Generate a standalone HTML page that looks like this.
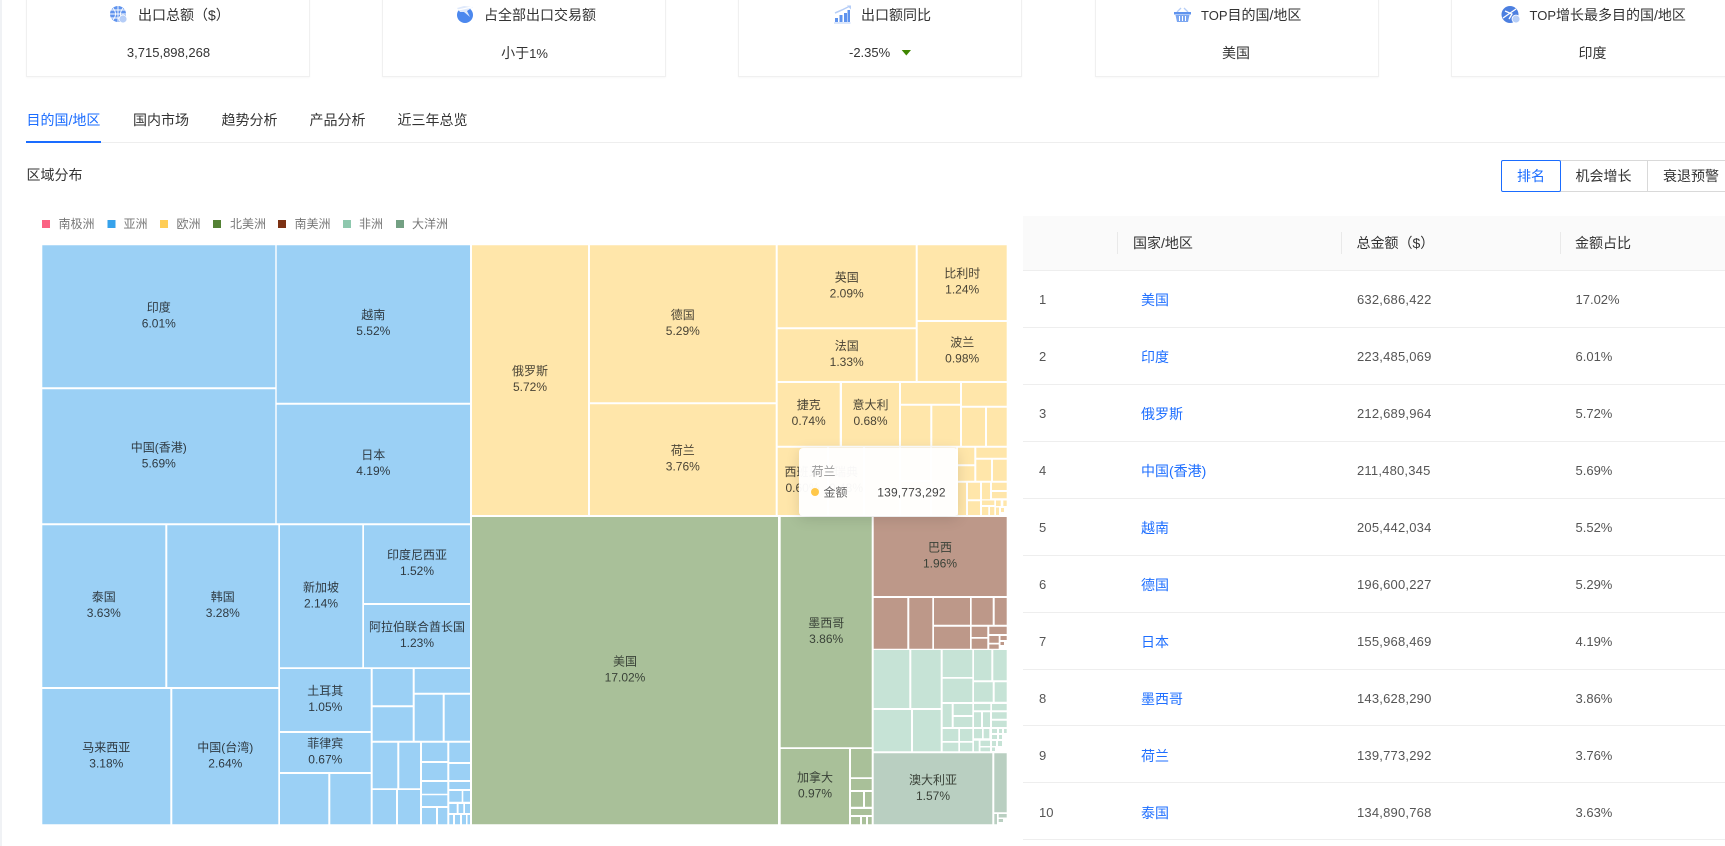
<!DOCTYPE html>
<html lang="zh">
<head>
<meta charset="utf-8">
<title>出口概览</title>
<style>
html,body{margin:0;padding:0;background:#fff}
body{width:1725px;height:846px;overflow:hidden;position:relative;font-family:"Liberation Sans","Noto Sans CJK SC",sans-serif;color:#333;font-size:14px}
.gut{position:absolute;left:0;top:0;width:2px;height:846px;background:#f0f2f5}
.card{position:absolute;top:-2px;width:282px;height:77px;border:1px solid #f0f0f0;background:#fff;box-shadow:0 1px 2px rgba(0,0,0,.03)}
.t{position:absolute;white-space:nowrap;line-height:20px;height:20px}
.c{transform:translateX(-50%)}
.l{font-size:13px}
.tab{top:110px}
.btn{position:absolute;top:159.5px;height:30px;line-height:30px;text-align:center;border:1px solid #d9d9d9;background:#fff;box-sizing:content-box}
.hd{position:absolute;left:1023px;top:216px;width:702px;height:54px;background:#fafafa;border-bottom:1px solid #eee}
.sep{position:absolute;top:232px;width:1px;height:22px;background:#e9e9e9}
.row{position:absolute;left:1023px;width:702px;height:1px;background:#eee}
.r{font-size:13px;color:#555;margin-top:1px}
.n{letter-spacing:.2px}
.a{color:#1f6fff;font-size:14px;margin-top:1px}
.tip{position:absolute;left:799px;top:448px;width:159px;height:68px;border-radius:4px;background:rgba(255,255,255,.96);box-shadow:0 3px 14px rgba(0,0,0,.12)}
svg{position:absolute;left:0;top:0}
svg text{font-family:"Liberation Sans","Noto Sans CJK SC",sans-serif;font-size:12px}
</style>
</head>
<body>
<div class="gut"></div>

<div class="card" style="left:26px"></div>
<div class="card" style="left:382px"></div>
<div class="card" style="left:738px"></div>
<div class="card" style="left:1094.5px"></div>
<div class="card" style="left:1450.5px"></div>

<!-- card icons -->
<svg width="1725" height="60" style="z-index:2">
  <g>
    <circle cx="118" cy="14" r="8" fill="#5f93ee"/>
    <path d="M110 14H126M118 6V22M113 8Q118 14 113 20M123 8Q118 14 123 20M111 10H125M111 18H125" stroke="#fff" stroke-width=".9" fill="none"/>
    <circle cx="123" cy="19" r="4" fill="#b5cdf7" stroke="#fff" stroke-width=".8"/>
  </g>
  <g>
    <circle cx="465" cy="15" r="8" fill="#4c88ee"/>
    <path d="M457 8L464 6L473 7L467 11L470 17L464 12L460 12Z" fill="#dfe9fb"/>
    <path d="M458 10L472 7" stroke="#fff" stroke-width="1.2"/>
  </g>
  <g>
    <path d="M835 13L842 10L846 8L850 6" stroke="#b5cdf7" stroke-width="1.5" fill="none"/>
    <path d="M847 5.5H851V9.5Z" fill="#b5cdf7"/>
    <path d="M835 18H838V22H835ZM839.5 15H842.5V22H839.5ZM844 13H847V22H844Z" fill="#5f93ee"/>
    <rect x="847.5" y="10" width="2.5" height="12" fill="#5f93ee"/>
    <rect x="834" y="22.5" width="16.5" height="1" fill="#b5cdf7"/>
  </g>
  <g>
    <path d="M1177 12L1181 8M1188 12L1184 8" stroke="#b5cdf7" stroke-width="1.3" fill="none"/>
    <rect x="1174" y="12" width="17" height="2.5" fill="#5f93ee"/>
    <path d="M1175.5 15H1189.5L1188 22H1177Z" fill="#7ba6f1"/>
    <path d="M1179.5 16V21M1182.5 16V21M1185.5 16V21" stroke="#fff" stroke-width="1"/>
  </g>
  <g>
    <circle cx="1510" cy="14.5" r="8.5" fill="#4c7fe0"/>
    <path d="M1503 18L1516 9M1505 11L1512 14L1509 19" stroke="#fff" stroke-width="1.3" fill="none"/>
    <circle cx="1516" cy="19" r="4" fill="#b5cdf7" stroke="#fff" stroke-width=".8"/>
  </g>
  <path d="M901.7 50H911L906.3 55.5Z" fill="#3f8600"/>
</svg>

<!-- card text -->
<span class="t" style="left:138px;top:5px">出口总额（$）</span>
<span class="t c l" style="left:168.5px;top:43px">3,715,898,268</span>
<span class="t" style="left:484px;top:5px">占全部出口交易额</span>
<span class="t c" style="left:524.5px;top:43px">小于<span class="l">1%</span></span>
<span class="t" style="left:861px;top:5px">出口额同比</span>
<span class="t l" style="left:849px;top:43px">-2.35%</span>
<span class="t" style="left:1201px;top:5px"><span class="l">TOP</span>目的国/地区</span>
<span class="t c" style="left:1236px;top:43px">美国</span>
<span class="t" style="left:1529.5px;top:5px"><span class="l">TOP</span>增长最多目的国/地区</span>
<span class="t c" style="left:1592.5px;top:43px">印度</span>

<!-- tabs -->
<div style="position:absolute;left:26px;top:142px;width:1699px;height:1px;background:#eee"></div>
<div style="position:absolute;left:26px;top:141px;width:75px;height:2px;background:#1a6cff"></div>
<span class="t tab" style="left:26.5px;color:#1a6cff">目的国/地区</span>
<span class="t tab" style="left:133px">国内市场</span>
<span class="t tab" style="left:221.5px">趋势分析</span>
<span class="t tab" style="left:309.5px">产品分析</span>
<span class="t tab" style="left:397.5px">近三年总览</span>

<span class="t" style="left:26.5px;top:165px">区域分布</span>

<!-- button group -->
<div class="btn" style="left:1560px;width:87px;border-left:0">机会增长</div>
<div class="btn" style="left:1648px;width:86px;border-left:0">衰退预警</div>
<div class="btn" style="left:1501px;width:58px;border-color:#1a6cff;color:#1a6cff;border-radius:2px">排名</div>

<!-- treemap -->
<svg width="1725" height="846">
  <!-- legend -->
  <rect x="42" y="220" width="8" height="8" fill="#fb6283"/>
  <rect x="107.5" y="220" width="8" height="8" fill="#36a2eb"/>
  <rect x="160" y="220" width="8" height="8" fill="#ffcd56"/>
  <rect x="213" y="220" width="8" height="8" fill="#538134"/>
  <rect x="278" y="220" width="8" height="8" fill="#7c3113"/>
  <rect x="343" y="220" width="8" height="8" fill="#8ec8ae"/>
  <rect x="396" y="220" width="8" height="8" fill="#73a083"/>
  <g fill="#777">
    <text x="58.5" y="228">南极洲</text>
    <text x="123.5" y="228">亚洲</text>
    <text x="176.5" y="228">欧洲</text>
    <text x="230" y="228">北美洲</text>
    <text x="294.5" y="228">南美洲</text>
    <text x="359" y="228">非洲</text>
    <text x="412" y="228">大洋洲</text>
  </g>

  <!-- Asia -->
  <path fill="#9bd0f5" d="M42.3 245.3H275.3V387.3H42.3Z
  M42.3 389.3H275.3V523.3H42.3Z
  M276.7 245.3H470V402.7H276.7Z
  M276.7 404.7H470V523.3H276.7Z
  M42.3 525.3H165.3V687H42.3Z
  M167.3 525.3H278.3V687H167.3Z
  M42.3 689H170.3V824.3H42.3Z
  M172.3 689H278.3V824.3H172.3Z
  M280 525.3H362.3V667.3H280Z
  M364 525.3H470V603H364Z
  M364 605H470V667.3H364Z
  M280 669H370.7V731H280Z
  M280 733H370.7V772H280Z
  M280 774H328.3V824.3H280Z
  M330.3 774H370.7V824.3H330.3Z
  M372.7 669H412.7V705.3H372.7Z
  M372.7 707.3H412.7V740.7H372.7Z
  M414.7 669H470V692.7H414.7Z
  M414.7 694.7H442.7V740.7H414.7Z
  M444.7 694.7H470V740.7H444.7Z
  M372.7 742.7H397.3V788.3H372.7Z
  M399.3 742.7H420V788.3H399.3Z
  M372.7 790H396V824.3H372.7Z
  M398 790H420V824.3H398Z
  M422 742.7H447.3V761H422Z
  M449.3 742.7H470V762H449.3Z
  M422 763H447.3V780H422Z
  M449.3 764H470V780H449.3Z
  M422 782H447.3V793.7H422Z
  M449.3 782H470V789H449.3Z
  M422 795.3H447.3V806H422Z
  M422 808H436V824.3H422Z
  M438 808H447.3V824.3H438Z
  M449.3 791H461.7V801.7H449.3Z
  M463.3 791H470V801.7H463.3Z
  M449.3 804H456.7V813H449.3Z
  M458.6 804H463.3V813H458.6Z
  M465 804H470V813H465Z
  M449.3 815H453V824.3H449.3Z
  M455 815H460V824.3H455Z
  M462 815H466V824.3H462Z
  M467.5 815H470V824.3H467.5Z"/>

  <!-- Europe -->
  <path fill="#ffe6aa" d="M472 245.3H588V515H472Z
  M590 245.3H775.7V402.3H590Z
  M590 404.3H775.7V515H590Z
  M777.7 245.3H915.7V327.3H777.7Z
  M917.7 245.3H1006.7V320H917.7Z
  M777.7 329.3H915.7V381H777.7Z
  M917.7 322H1006.7V381H917.7Z
  M777.7 383H839.7V445.7H777.7Z
  M842 383H899V445.7H842Z
  M901 383H960V403.7H901Z
  M962 383H1006.7V405.7H962Z
  M901 405.7H930.3V445.7H901Z
  M932.3 405.7H960V445.7H932.3Z
  M962 407.7H985V445.7H962Z
  M987 407.7H1006.7V445.7H987Z
  M777.7 447.7H827V515H777.7Z
  M829 447.7H863V515H829Z
  M865 447.7H899V515H865Z
  M901 447.7H930V480H901Z
  M901 482H930V515H901Z
  M932 447.7H956V515H932Z
  M958 447.7H974.3V464.3H958Z
  M976.3 447.7H1006.7V457.7H976.3Z
  M958 466.3H974.3V480.7H958Z
  M976.3 459.7H991V480.7H976.3Z
  M993 459.7H1006.7V480.7H993Z
  M958 482.7H966V515H958Z
  M968 482.7H980V499.3H968Z
  M982 482.7H990V499.3H982Z
  M992 482.7H1006.7V490H992Z
  M992 492H1006.7V498.3H992Z
  M968 501.3H980V515H968Z
  M982 500.5H994.3V505H982Z
  M996 500.5H1000.7V506H996Z
  M1003.3 500.5H1006.7V506H1003.3Z
  M982 507H988.3V515H982Z
  M990 507H994.3V515H990Z
  M996 507.5H999V515H996Z
  M1001 508H1004V512H1001Z"/>

  <!-- North America -->
  <path fill="#a9c099" d="M472 517H778V824.3H472Z
  M780.7 517H871.7V747.3H780.7Z
  M780.7 749H849V824.3H780.7Z
  M851 749H871.7V777.3H851Z
  M851 779H871.7V790H851Z
  M851 792H863V806.7H851Z
  M865 792H871.7V806.7H865Z
  M851 809H871.7V815H851Z
  M851 817H860V824.3H851Z
  M862 817H866V824.3H862Z
  M868 817H871.7V824.3H868Z"/>

  <!-- South America -->
  <path fill="#bd9889" d="M873.7 517H1006.7V596H873.7Z
  M873.7 598H907.3V648.7H873.7Z
  M909.3 598H932.3V648.7H909.3Z
  M934 598H970V624.7H934Z
  M934 626.7H970V648.7H934Z
  M971.7 598H992.7V624.7H971.7Z
  M994.7 598H1006.7V624.7H994.7Z
  M971.7 626.7H987.3V637H971.7Z
  M971.7 638.7H987.3V648.7H971.7Z
  M989.3 626.7H1006.7V634H989.3Z
  M989.3 636H998.7V642.7H989.3Z
  M1000.5 636H1006.7V640H1000.5Z
  M1000.5 642H1004V645H1000.5Z
  M989.3 644.5H998.7V648.7H989.3Z"/>

  <!-- Africa -->
  <path fill="#c6e3d6" d="M873.7 650H909.3V708H873.7Z
  M911.3 650H940.7V708H911.3Z
  M873.7 710H911V751.3H873.7Z
  M913 710H940.7V751.3H913Z
  M942.7 650H972.3V677H942.7Z
  M942.7 678.7H972.3V702H942.7Z
  M974 650H991.3V680.3H974Z
  M993.3 650H1006.7V680.3H993.3Z
  M974 682.3H992.7V701.7H974Z
  M994.7 682.3H1006.7V701.7H994.7Z
  M942.7 704H951.7V727H942.7Z
  M953.7 704H972.3V715H953.7Z
  M953.7 717H972.3V727H953.7Z
  M974 704H990.3V710.3H974Z
  M992 704H1006.7V710.3H992Z
  M974 712.3H981V727H974Z
  M983 712.3H990V727H983Z
  M992 712.3H1006.7V718.7H992Z
  M992 720.7H1006.7V727H992Z
  M942.7 729H958.3V741H942.7Z
  M960 729H972.3V741H960Z
  M942.7 742.7H958.3V751.3H942.7Z
  M960 742.7H972.3V751.3H960Z
  M974 729H982V738.3H974Z
  M983.7 729H989.3V738.3H983.7Z
  M974 740.7H978.7V751.3H974Z
  M980.5 740.7H990V746H980.5Z
  M980.5 747.5H990V751.3H980.5Z
  M992 729H997V733H992Z
  M999 729H1002V733H999Z
  M1004 729H1006.7V733H1004Z
  M992 735H997V739H992Z
  M999 735H1002V739H999Z
  M992 741H996V746H992Z
  M998 741H1002V746H998Z
  M992 747.5H995V751H992Z"/>

  <!-- Oceania -->
  <path fill="#b9cfc1" d="M873.7 753.3H992.3V824.3H873.7Z
  M994.3 753.3H1006.7V812.3H994.3Z
  M994.3 814H997V824.3H994.3Z
  M998.7 814H1006.7V817.5H998.7Z
  M998.7 819H1003V822H998.7Z"/>

  <!-- labels -->
  <g transform="translate(0,-1)">
  <g text-anchor="middle" fill="#2f3a42">
    <text x="158.8" y="312.3">印度<tspan x="158.8" dy="16">6.01%</tspan></text>
    <text x="158.8" y="452.3">中国(香港)<tspan x="158.8" dy="16">5.69%</tspan></text>
    <text x="373.3" y="320">越南<tspan x="373.3" dy="16">5.52%</tspan></text>
    <text x="373.3" y="460">日本<tspan x="373.3" dy="16">4.19%</tspan></text>
    <text x="103.8" y="602">泰国<tspan x="103.8" dy="16">3.63%</tspan></text>
    <text x="222.8" y="602">韩国<tspan x="222.8" dy="16">3.28%</tspan></text>
    <text x="106.3" y="752.6">马来西亚<tspan x="106.3" dy="16">3.18%</tspan></text>
    <text x="225.3" y="752.6">中国(台湾)<tspan x="225.3" dy="16">2.64%</tspan></text>
    <text x="321" y="592.3">新加坡<tspan x="321" dy="16">2.14%</tspan></text>
    <text x="417" y="560">印度尼西亚<tspan x="417" dy="16">1.52%</tspan></text>
    <text x="417" y="632">阿拉伯联合酋长国<tspan x="417" dy="16">1.23%</tspan></text>
    <text x="325.3" y="696">土耳其<tspan x="325.3" dy="16">1.05%</tspan></text>
    <text x="325.3" y="748.5">菲律宾<tspan x="325.3" dy="16">0.67%</tspan></text>
  </g>
  <g text-anchor="middle" fill="#4a4436">
    <text x="530" y="376">俄罗斯<tspan x="530" dy="16">5.72%</tspan></text>
    <text x="682.8" y="319.8">德国<tspan x="682.8" dy="16">5.29%</tspan></text>
    <text x="682.8" y="455.6">荷兰<tspan x="682.8" dy="16">3.76%</tspan></text>
    <text x="846.7" y="282.3">英国<tspan x="846.7" dy="16">2.09%</tspan></text>
    <text x="962.2" y="278.6">比利时<tspan x="962.2" dy="16">1.24%</tspan></text>
    <text x="846.7" y="351">法国<tspan x="846.7" dy="16">1.33%</tspan></text>
    <text x="962.2" y="347.5">波兰<tspan x="962.2" dy="16">0.98%</tspan></text>
    <text x="808.7" y="410">捷克<tspan x="808.7" dy="16">0.74%</tspan></text>
    <text x="870.5" y="410">意大利<tspan x="870.5" dy="16">0.68%</tspan></text>
    <text x="802.5" y="477">西班牙<tspan x="802.5" dy="16">0.60%</tspan></text>
    <text x="846" y="477">瑞典<tspan x="846" dy="16">0.48%</tspan></text>
  </g>
  <g text-anchor="middle" fill="#3a4238">
    <text x="625" y="666.6">美国<tspan x="625" dy="16">17.02%</tspan></text>
    <text x="826.2" y="628">墨西哥<tspan x="826.2" dy="16">3.86%</tspan></text>
    <text x="815" y="782.6">加拿大<tspan x="815" dy="16">0.97%</tspan></text>
    <text x="940" y="552.5">巴西<tspan x="940" dy="16">1.96%</tspan></text>
    <text x="933" y="784.8">澳大利亚<tspan x="933" dy="16">1.57%</tspan></text>
  </g>
  </g>
</svg>

<!-- tooltip -->
<div class="tip"></div>
<svg width="1725" height="846" style="z-index:3">
  <text x="811.5" y="475.5" fill="#999">荷兰</text>
  <circle cx="815" cy="492" r="4" fill="#ffc84a"/>
  <text x="823.5" y="496.5" fill="#666">金额</text>
  <text x="945.7" y="496.5" fill="#444" text-anchor="end" letter-spacing=".15">139,773,292</text>
</svg>

<!-- table -->
<div class="hd"></div>
<div class="sep" style="left:1116.5px"></div>
<div class="sep" style="left:1340.5px"></div>
<div class="sep" style="left:1559.5px"></div>
<span class="t" style="left:1133px;top:233px">国家/地区</span>
<span class="t" style="left:1356.5px;top:233px">总金额（$）</span>
<span class="t" style="left:1575px;top:233px">金额占比</span>

<div class="row" style="top:327px"></div>
<div class="row" style="top:384px"></div>
<div class="row" style="top:441px"></div>
<div class="row" style="top:498px"></div>
<div class="row" style="top:555px"></div>
<div class="row" style="top:612px"></div>
<div class="row" style="top:669px"></div>
<div class="row" style="top:725px"></div>
<div class="row" style="top:782px"></div>
<div class="row" style="top:839px"></div>

<span class="t r" style="left:1039px;top:289px">1</span><span class="t a" style="left:1141px;top:289px">美国</span><span class="t r n" style="left:1357px;top:289px">632,686,422</span><span class="t r" style="left:1575.5px;top:289px">17.02%</span>
<span class="t r" style="left:1039px;top:346px">2</span><span class="t a" style="left:1141px;top:346px">印度</span><span class="t r n" style="left:1357px;top:346px">223,485,069</span><span class="t r" style="left:1575.5px;top:346px">6.01%</span>
<span class="t r" style="left:1039px;top:403px">3</span><span class="t a" style="left:1141px;top:403px">俄罗斯</span><span class="t r n" style="left:1357px;top:403px">212,689,964</span><span class="t r" style="left:1575.5px;top:403px">5.72%</span>
<span class="t r" style="left:1039px;top:460px">4</span><span class="t a" style="left:1141px;top:460px">中国(香港)</span><span class="t r n" style="left:1357px;top:460px">211,480,345</span><span class="t r" style="left:1575.5px;top:460px">5.69%</span>
<span class="t r" style="left:1039px;top:517px">5</span><span class="t a" style="left:1141px;top:517px">越南</span><span class="t r n" style="left:1357px;top:517px">205,442,034</span><span class="t r" style="left:1575.5px;top:517px">5.52%</span>
<span class="t r" style="left:1039px;top:574px">6</span><span class="t a" style="left:1141px;top:574px">德国</span><span class="t r n" style="left:1357px;top:574px">196,600,227</span><span class="t r" style="left:1575.5px;top:574px">5.29%</span>
<span class="t r" style="left:1039px;top:631px">7</span><span class="t a" style="left:1141px;top:631px">日本</span><span class="t r n" style="left:1357px;top:631px">155,968,469</span><span class="t r" style="left:1575.5px;top:631px">4.19%</span>
<span class="t r" style="left:1039px;top:688px">8</span><span class="t a" style="left:1141px;top:688px">墨西哥</span><span class="t r n" style="left:1357px;top:688px">143,628,290</span><span class="t r" style="left:1575.5px;top:688px">3.86%</span>
<span class="t r" style="left:1039px;top:745px">9</span><span class="t a" style="left:1141px;top:745px">荷兰</span><span class="t r n" style="left:1357px;top:745px">139,773,292</span><span class="t r" style="left:1575.5px;top:745px">3.76%</span>
<span class="t r" style="left:1039px;top:802px">10</span><span class="t a" style="left:1141px;top:802px">泰国</span><span class="t r n" style="left:1357px;top:802px">134,890,768</span><span class="t r" style="left:1575.5px;top:802px">3.63%</span>
</body>
</html>
